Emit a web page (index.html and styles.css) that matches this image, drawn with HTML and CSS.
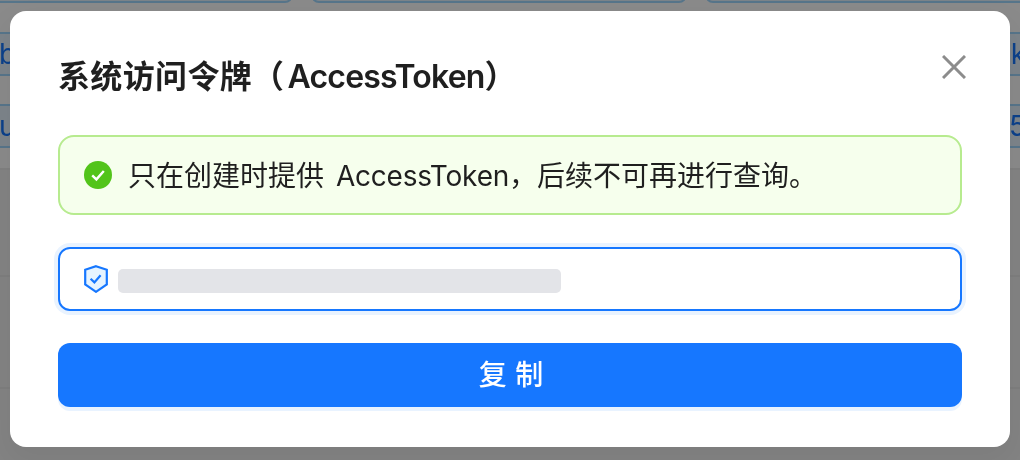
FILE: index.html
```html
<!DOCTYPE html>
<html lang="zh">
<head>
<meta charset="utf-8">
<title>系统访问令牌</title>
<link rel="stylesheet" href="styles.css">
</head>
<body>
<main class="page">
  <div class="tag-row tag-row-top">
    <span class="tag tag-a"></span>
    <span class="tag tag-b"></span>
    <span class="tag tag-c"></span>
  </div>
  <div class="tag-row tag-row-wide"><span class="tag tag-full"><span class="edge-l">b</span><span class="edge-r">ak</span></span></div>
  <div class="tag-row tag-row-second"><span class="tag tag-full"><span class="edge-l">ul</span><span class="edge-r">5</span></span></div>
  <div class="lower">
    <div class="rule rule-2"></div>
    <div class="rule rule-3"></div>
  </div>
</main>
<div class="mask"></div>
<section class="modal" role="dialog" aria-label="系统访问令牌">
  <header class="modal-head">
    <h1 class="modal-title">系统访问令牌（<span class="title-latin">AccessToken</span>）</h1>
    <button class="close" type="button" aria-label="关闭">
      <svg viewBox="0 0 24 24" width="24" height="24"><path d="M1 1 23 23M23 1 1 23" fill="none" stroke="#8c8c8c" stroke-width="3"/></svg>
    </button>
  </header>
  <div class="alert">
    <svg class="alert-icon" viewBox="0 0 28 28" width="28" height="28"><circle cx="14" cy="14" r="14" fill="#52c41a"/><path d="M8.2 14.4 12.4 18.4 19.8 10" fill="none" stroke="#fff" stroke-width="2.4"/></svg>
    <span class="alert-text">只在创建时提供 <span class="alert-latin">AccessToken</span>，后续不可再进行查询。</span>
  </div>
  <div class="field">
    <svg class="shield" viewBox="0 0 24 28" width="24" height="28"><path d="M12 1.2 22.8 4.8V19.5L12 26.8 1.2 19.5V4.8Z" fill="#e6f4ff" stroke="#1677ff" stroke-width="2.2"/><path d="M6.6 13.8 10.4 17.4 16.6 10.2" fill="none" stroke="#1677ff" stroke-width="2.2"/></svg>
    <span class="redacted"></span>
  </div>
  <button class="copy" type="button">复 制</button>
</section>
</body>
</html>
```
FILE: styles.css
```css
* { box-sizing: border-box; }
html, body { margin: 0; height: 100%; overflow: hidden; }
body {
  background: #fff;
  font-family: Inter, "Noto Sans CJK SC", sans-serif;
  color: #1f1f1f;
}
.page { height: 460px; overflow: hidden; filter: blur(0.5px); }
.tag-row { display: flex; }
.tag-row-top { gap: 18px; height: 3px; align-items: flex-end; }
.tag { display: block; background: #e6f4ff; border: 2px solid #a0d8ff; border-radius: 8px; flex: none; }
.tag-a { width: 303px; height: 44px; margin-left: -10px; }
.tag-b { width: 376px; height: 44px; }
.tag-c { width: 376px; height: 44px; }
.tag-row-wide { margin-top: 29px; }
.tag-row-second { margin-top: 28px; }
.tag-full {
  width: 100%; height: 44px;
  display: flex; justify-content: space-between; align-items: center;
  border-left: 0; border-right: 0; border-radius: 0;
  color: #1677ff; font-size: 28px; line-height: 38px;
}
.edge-l { margin-left: -1px; }
.edge-r { margin-right: -6px; }
.lower { margin-top: 20px; height: 292px; background: #f2f2f2; border-top: 2px solid #ececec; }
.rule { height: 2px; background: #e8e8e8; }
.rule-2 { margin-top: 105px; }
.rule-3 { margin-top: 110px; }

.mask { position: fixed; inset: 0; background: rgba(0, 0, 0, 0.46); }
.modal {
  position: fixed; left: 10px; top: 11px; width: 1000px; height: 436px;
  padding: 40px 48px 0;
  background: #fff; border-radius: 16px;
  box-shadow: 0 12px 32px 8px rgba(0, 0, 0, 0.05);
}
.modal-head { display: flex; justify-content: space-between; align-items: flex-start; height: 84px; }
.modal-title { margin: 0; font-size: 32px; line-height: 52px; font-weight: 600; color: #1f1f1f; letter-spacing: 0.35px; }
.title-latin { margin-left: 3px; letter-spacing: -0.8px; }
.close { padding: 0; margin: 4px -4px 0 0; background: none; border: 0; display: flex; }
.alert {
  display: flex; align-items: center; gap: 16px;
  height: 80px; padding: 0 24px;
  background: #f6ffed; border: 2px solid #b7eb8f; border-radius: 16px;
  font-size: 28px; line-height: 44px;
}
.alert-text { padding-top: 2px; }
.alert-latin { margin-left: 4px; letter-spacing: -0.2px; }
.alert-icon { flex: none; }
.field {
  display: flex; align-items: center; gap: 10px;
  height: 64px; margin-top: 32px; padding: 0 24px;
  border: 2px solid #1677ff; border-radius: 12px;
  box-shadow: 0 0 0 4px #e9f3ff;
}
.shield { flex: none; }
.redacted { width: 443px; height: 24px; margin-top: 4px; background: #e3e4e8; border-radius: 5px; }
.copy {
  display: block; width: 100%; height: 64px; margin-top: 32px; padding: 0 0 0 2px;
  background: #1677ff; border: 0; border-radius: 12px;
  box-shadow: 0 4px 0 #e9f3ff;
  color: #fff; font: inherit; font-size: 28px; font-weight: 500; line-height: 44px; word-spacing: 1px;
}
```
